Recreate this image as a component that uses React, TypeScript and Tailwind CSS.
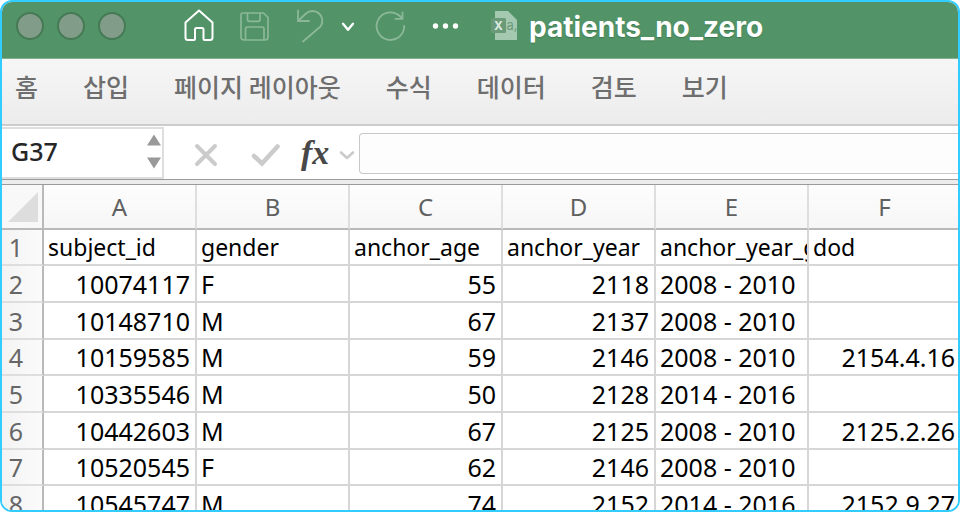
import { clsx } from "clsx";

interface Patient {
  subjectId: string
  gender: string
  anchorAge: number
  anchorYear: number
  anchorYearGroup: string
  dod?: string
}

const tabs = ["홈", "삽입", "페이지 레이아웃", "수식", "데이터", "검토", "보기"];

const columns = ["A", "B", "C", "D", "E", "F"];

const fields = ["subject_id", "gender", "anchor_age", "anchor_year", "anchor_year_group", "dod"];

const patients: Patient[] = [
  { subjectId: "10074117", gender: "F", anchorAge: 55, anchorYear: 2118, anchorYearGroup: "2008 - 2010" },
  { subjectId: "10148710", gender: "M", anchorAge: 67, anchorYear: 2137, anchorYearGroup: "2008 - 2010" },
  { subjectId: "10159585", gender: "M", anchorAge: 59, anchorYear: 2146, anchorYearGroup: "2008 - 2010", dod: "2154.4.16" },
  { subjectId: "10335546", gender: "M", anchorAge: 50, anchorYear: 2128, anchorYearGroup: "2014 - 2016" },
  { subjectId: "10442603", gender: "M", anchorAge: 67, anchorYear: 2125, anchorYearGroup: "2008 - 2010", dod: "2125.2.26" },
  { subjectId: "10520545", gender: "F", anchorAge: 62, anchorYear: 2146, anchorYearGroup: "2008 - 2010" },
  { subjectId: "10545747", gender: "M", anchorAge: 74, anchorYear: 2152, anchorYearGroup: "2014 - 2016", dod: "2152.9.27" },
];

function TitleBar() {
  return (
    <header className="flex h-[57px] shrink-0 items-start border-b border-[#7fb08f] bg-[#529467] pl-[14px] text-white">
      <div className="flex gap-[13px] pt-[10px]">
        <button aria-label="닫기" className="size-7 rounded-full border-2 border-[#457a55] bg-[#819c88]"></button>
        <button aria-label="최소화" className="size-7 rounded-full border-2 border-[#457a55] bg-[#819c88]"></button>
        <button aria-label="확대" className="size-7 rounded-full border-2 border-[#457a55] bg-[#819c88]"></button>
      </div>
      <div className="flex items-center pt-[6px] pl-[55px]">
        <button aria-label="홈 화면">
          <svg className="h-10 w-9" viewBox="0 0 36 40" fill="none" stroke="currentColor" strokeWidth="2" strokeLinejoin="round">
            <path d="M18 2.5 L31.5 14.5 V29.5 Q31.5 32 29 32 H23.5 Q22.5 32 22.5 31 V21.500 Q22.500 20 21 20 H15.500 Q14 20 14 21.500 V31 Q14 32 13 32 H7 Q4.500 32 4.500 29.500 V14.500 Z" />
          </svg>
        </button>
        <button aria-label="저장" className="ml-[19px] text-[#8cb899]">
          <svg className="h-10 w-9" viewBox="0 0 36 40" fill="none" stroke="currentColor" strokeWidth="1.7" strokeLinejoin="round">
            <path d="M7 5 H27.500 L32 9.500 V29 Q32 32 29 32 H8 Q5 32 5 29 V7 Q5 5 7 5 Z" />
            <path d="M11.500 5 V11.500 Q11.500 13.300 13.300 13.300 H22 Q24 13.300 24 11.500 V5" />
            <path d="M9.500 32 V21 Q9.500 19 11.500 19 H26 Q28 19 28 21 V32" />
          </svg>
        </button>
        <button aria-label="실행 취소" className="ml-5 text-[#8cb899]">
          <svg className="h-10 w-9" viewBox="0 0 36 40" fill="none" stroke="currentColor" strokeWidth="1.8" strokeLinecap="round" strokeLinejoin="round">
            <path d="M6 2.500 V13 H17" />
            <path d="M6 13 L14 5.500 A9.800 9.800 0 0 1 28.500 18.500 L11 33.500" />
          </svg>
        </button>
        <button aria-label="실행 취소 목록" className="ml-3">
          <svg className="h-10 w-4" viewBox="0 0 16 40" fill="none" stroke="currentColor" strokeWidth="2.4" strokeLinecap="round" strokeLinejoin="round">
            <path d="M3 15.800 L8 21.800 L13 15.800" />
          </svg>
        </button>
        <button aria-label="다시 실행" className="ml-4 text-[#8cb899]">
          <svg className="h-10 w-9" viewBox="0 0 36 40" fill="none" stroke="currentColor" strokeWidth="1.8" strokeLinecap="round" strokeLinejoin="round">
            <path d="M32.200 18 A13.800 13.800 0 1 1 27.500 7.800 L30.500 10.500" />
            <path d="M30.500 4.500 V10.800 H23.500" />
          </svg>
        </button>
        <button aria-label="더 보기" className="ml-[21px]">
          <svg className="h-10 w-8" viewBox="0 0 32 40" fill="currentColor">
            <circle cx="6.500" cy="18" r="2.700" />
            <circle cx="16.500" cy="18" r="2.700" />
            <circle cx="26.500" cy="18" r="2.700" />
          </svg>
        </button>
        <svg className="ml-7 h-10 w-8" viewBox="0 0 32 40" aria-hidden="true">
          <path d="M6 3 H19 L28 12 V32 H6 Z" fill="#a5c9b0" />
          <rect x="2" y="10" width="15" height="15" rx="1.500" fill="#6b9a79" />
          <text x="9.500" y="22" fontSize="12" fontWeight="700" textAnchor="middle" fill="#dcebe0" fontFamily="Inter, sans-serif">X</text>
          <text x="17.500" y="22" fontSize="13" fill="#6b9a79" fontFamily="Inter, sans-serif">a,</text>
        </svg>
      </div>
      <h1 className="pt-[5px] pl-2 font-['Inter',sans-serif] text-[28px] leading-10 font-bold [text-shadow:0_1px_1px_#3b7a50]">patients_no_zero</h1>
    </header>
  )
}

function FormulaBar() {
  return (
    <div className="flex h-[54px] shrink-0 items-stretch border-b border-[#9b9b9b] bg-white">
      <div className="mt-px flex h-[52px] w-[162px] shrink-0 items-start border-y-2 border-r-2 border-[#dedede]">
        <input aria-label="이름 상자" defaultValue="G37" className="mt-[6px] w-36 bg-transparent pl-[9px] text-[25px] leading-8 font-medium text-[#262626] outline-none" />
        <div className="flex flex-col gap-[11px] pt-[5px]">
          <button aria-label="위로">
            <svg className="block h-3 w-4" viewBox="0 0 16 12" fill="#999999"><path d="M8 0.500 L15 11.500 H1 Z" /></svg>
          </button>
          <button aria-label="아래로">
            <svg className="block h-3 w-4" viewBox="0 0 16 12" fill="#999999"><path d="M1 0.500 H15 L8 11.500 Z" /></svg>
          </button>
        </div>
      </div>
      <div className="flex shrink-0 items-center pt-1 pl-7 text-[#cbcbcb]">
        <button aria-label="취소">
          <svg className="size-7" viewBox="0 0 28 28" fill="none" stroke="currentColor" strokeWidth="4" strokeLinecap="round">
            <path d="M5 5 L23 23 M23 5 L5 23" />
          </svg>
        </button>
        <button aria-label="입력" className="ml-[30px]">
          <svg className="h-7 w-8" viewBox="0 0 32 28" fill="none" stroke="currentColor" strokeWidth="4.500" strokeLinecap="round">
            <path d="M4 15 L12 22.500 L27.500 5.500" />
          </svg>
        </button>
        <button aria-label="함수 삽입" className="-mt-1 ml-[19px] w-8 text-left font-['Liberation_Serif',serif] text-[34px] leading-10 font-bold text-[#484848] italic">fx</button>
        <button aria-label="함수 목록" className="ml-[5px]">
          <svg className="h-4 w-[18px]" viewBox="0 0 18 16" fill="none" stroke="currentColor" strokeWidth="2.600" strokeLinecap="round" strokeLinejoin="round">
            <path d="M3 5.500 L9 11 L15 5.500" />
          </svg>
        </button>
      </div>
      <input aria-label="수식 입력줄" className="mt-[7px] ml-[3px] h-[41px] min-w-0 flex-1 rounded-l-sm border border-r-0 border-[#c8c8c8] bg-[#fdfdfd] px-2 text-2xl outline-none" />
    </div>
  )
}

function Sheet() {
  const cell = "overflow-hidden border-r-2 border-b-2 border-[#d6d6d6] p-0 pr-[5px] pl-1 leading-[34px] font-normal whitespace-nowrap";
  const rowHead = "border-r-2 border-b-2 border-r-[#b9b9b9] border-b-[#dedede] bg-linear-to-r from-[#f3f3f3] to-[#fbfbfb] p-0 pr-3 text-center leading-[34px] font-normal text-[#666666]";
  // two rows of 37px to one of 36px
  const row = "h-[37px] nth-[3n+1]:h-9";

  return (
    <table className="w-[calc(100%+4px)] table-fixed border-separate border-spacing-0 bg-white text-[25px] text-black">
      <thead className="text-2xl">
        <tr className="h-[45px]">
          <th className="w-[42px] border-r-2 border-b-2 border-[#b9b9b9] bg-[#f8f8f8] p-0">
            <button aria-label="모두 선택" className="block pl-[6px]">
              <svg className="size-8" viewBox="0 0 32 32" fill="#dddddd"><path d="M30 1 V31 H0 Z" /></svg>
            </button>
          </th>
          {columns.map((name) => (
            <th key={name} scope="col" className="border-r-2 border-b-2 border-r-[#dedede] border-b-[#b9b9b9] bg-linear-to-b from-[#fdfdfd] to-[#f6f6f6] p-0 leading-8 font-normal text-[#606060]">{name}</th>
          ))}
        </tr>
      </thead>
      <tbody>
        <tr className={row}>
          <th scope="row" className={rowHead}>1</th>
          {fields.map((field) => (
            <td key={field} className={clsx(cell, "text-[23px]")}>{field}</td>
          ))}
        </tr>
        {patients.map((item, index) => (
          <tr key={item.subjectId} className={row}>
            <th scope="row" className={rowHead}>{index + 2}</th>
            <td className={clsx(cell, "text-right")}>{item.subjectId}</td>
            <td className={cell}>{item.gender}</td>
            <td className={clsx(cell, "text-right")}>{item.anchorAge}</td>
            <td className={clsx(cell, "text-right")}>{item.anchorYear}</td>
            <td className={cell}>{item.anchorYearGroup}</td>
            <td className={clsx(cell, "text-right")}>{item.dod}</td>
          </tr>
        ))}
      </tbody>
    </table>
  )
}

export default function App() {
  return (
    <div className="h-screen bg-white">
      <div className="flex h-full flex-col overflow-hidden rounded-xl border-2 border-[#33ccff] font-['Noto_Sans','Noto_Sans_CJK_KR',sans-serif]">
        <TitleBar />
        <nav className="flex h-[67px] shrink-0 items-start gap-[45px] border-b-2 border-[#cccccc] bg-linear-to-b from-[#f6f6f6] to-[#ececec] pt-[9px] pl-[13px] font-['Noto_Sans_CJK_KR',sans-serif] text-[25px] leading-9 font-medium text-[#6e6e6e]">
          {tabs.map((tab) => (
            <a key={tab} href="#" className="whitespace-nowrap">{tab}</a>
          ))}
        </nav>
        <FormulaBar />
        <div className="h-[5px] shrink-0 border-b border-[#9b9b9b] bg-[#ececec]"></div>
        <main className="min-h-0 flex-1 overflow-hidden">
          <Sheet />
        </main>
      </div>
    </div>
  )
}
